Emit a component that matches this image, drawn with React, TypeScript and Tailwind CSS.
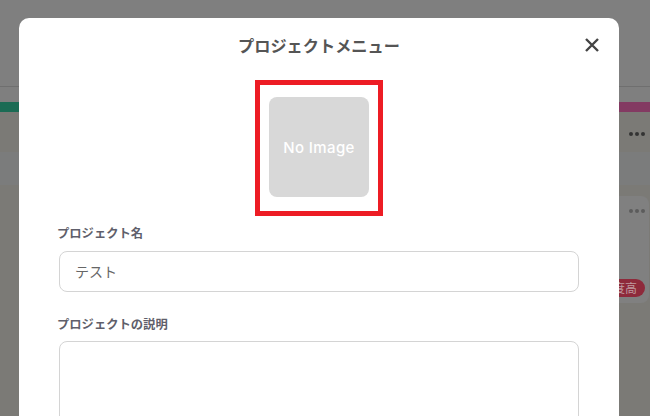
const jp = '"Noto Sans CJK JP", "Liberation Sans", sans-serif';

function Dots({ className }: { className: string }) {
  return (
    <div className={`flex gap-[2px] ${className}`}>
      <span className="h-[4px] w-[4px] rounded-full bg-current" />
      <span className="h-[4px] w-[4px] rounded-full bg-current" />
      <span className="h-[4px] w-[4px] rounded-full bg-current" />
    </div>
  );
}

function App() {
  return (
    <div className="relative flex h-[416px] w-[650px] flex-col overflow-hidden bg-[#7f7f7f]" style={{ fontFamily: jp }}>
      {/* page behind the dialog */}
      <div className="h-[87px] shrink-0 border-b border-[#6f6f6f]" />
      <div className="mt-[15px] flex h-[10px] shrink-0 justify-between">
        <div className="w-[30px] bg-[#1b6b54]" />
        <div className="w-[60px] bg-[#833a62]" />
      </div>
      <div className="flex-1 bg-[#7b7a76]">
        <div className="flex h-[40px] items-center justify-end pr-[5px] pt-[4px]">
          <Dots className="text-[#333333]" />
        </div>
        <div className="h-[33px] bg-[#7b7c7c]" />
        <div className="ml-auto mr-[1px] mt-[11px] flex h-[107px] w-[60px] flex-col items-end justify-between rounded-r-[8px] bg-[#808080] pb-[6px] pr-[4px] pt-[13px]">
          <Dots className="text-[#5c5c5c]" />
          <div className="flex h-[18px] w-[40px] items-center justify-end overflow-hidden whitespace-nowrap rounded-full bg-[#8e2a3b] pr-[8px] text-[12px] leading-none text-[#bf9a9f]">
            度高
          </div>
        </div>
      </div>

      {/* dialog */}
      <div className="absolute left-[19px] top-[18px] h-[420px] w-[600px] rounded-[10px] bg-white px-[40px]">
        <div className="relative flex h-[54px] items-center justify-center">
          <h2 className="text-[16.2px] font-bold text-[#555555]">プロジェクトメニュー</h2>
          <button className="absolute right-[-21px] top-[19px] text-[#444444]">
            <svg width="16" height="16" viewBox="0 0 16 16" fill="none" stroke="currentColor" strokeWidth="2.4" className="block">
              <path d="M2 2L14 14M14 2L2 14" />
            </svg>
          </button>
        </div>
        <div className="mt-[8px] flex justify-center">
          <div className="flex h-[136px] w-[128px] justify-center border-[5px] border-[#ed1c24] pt-[12px]">
            <div className="flex h-[100px] w-[100px] items-center justify-center rounded-[8px] bg-[#d8d8d8] pt-[2px] text-[15px] font-medium tracking-[0.4px] text-white" style={{ fontFamily: '"Inter", "Liberation Sans", sans-serif' }}>
              No Image
            </div>
          </div>
        </div>
        <label className="mt-[8px] ml-[-2px] block text-[12.3px] font-bold leading-[18px] text-[#5f5f6b]">プロジェクト名</label>
        <div className="mt-[9px] flex h-[41px] items-center rounded-[8px] border border-[#d4d4d4] px-[15px] text-[14px] text-[#666666]">
          テスト
        </div>
        <label className="mt-[23px] ml-[-2px] block text-[12.3px] font-bold leading-[18px] text-[#5f5f6b]">プロジェクトの説明</label>
        <div className="mt-[8px] h-[100px] rounded-[8px] border border-[#d4d4d4]" />
      </div>
    </div>
  );
}

export default App;
